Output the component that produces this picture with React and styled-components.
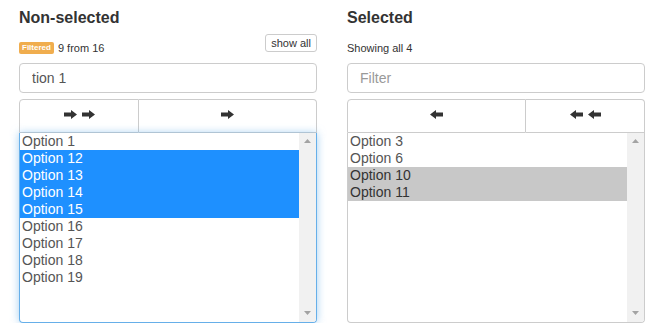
import React from 'react';
import styled, { createGlobalStyle } from 'styled-components';

const Global = createGlobalStyle`
    body {
        margin: 0;
        background: #fff;
        font-family: "Liberation Sans", Arial, sans-serif;
        color: #333;
    }
`;

const Page = styled.div`
    display: flex;
    gap: 30px;
    padding: 9px 15px 0 19px;
`;

const Column = styled.div`
    width: 298px;
    display: flex;
    flex-direction: column;
`;

const Title = styled.div`
    font-size: 16px;
    font-weight: bold;
    line-height: 18px;
    color: #333;
`;

const InfoRow = styled.div`
    height: 22px;
    margin-top: 7px;
    margin-bottom: 7px;
    display: flex;
    align-items: flex-end;
    font-size: 11px;
    line-height: 14px;
    color: #333;
    padding-bottom: 1px;
    box-sizing: border-box;
`;

const Badge = styled.span`
    display: inline-block;
    background: #f0ad4e;
    color: #fff;
    font-size: 8px;
    font-weight: bold;
    line-height: 12px;
    padding: 0 3px;
    border-radius: 2px;
    margin-right: 4px;
    margin-bottom: 1px;
`;

const ShowAll = styled.button`
    margin-left: auto;
    align-self: flex-start;
    font-family: inherit;
    font-size: 11px;
    line-height: 16px;
    padding: 0 5px;
    color: #333;
    background: #fff;
    border: 1px solid #ccc;
    border-radius: 3px;
`;

const Filter = styled.input`
    height: 30px;
    box-sizing: border-box;
    width: 100%;
    padding: 0 12px;
    font-family: inherit;
    font-size: 14px;
    color: #555;
    border: 1px solid #ccc;
    border-radius: 4px;
    outline: none;
    &::placeholder {
        color: #999;
    }
`;

const BtnGroup = styled.div`
    margin-top: 6px;
    display: flex;
    height: 34px;
`;

const MoveBtn = styled.button`
    flex: 0 0 ${p => p.w}px;
    box-sizing: border-box;
    background: #fff;
    border: 1px solid #ccc;
    border-left-width: ${p => (p.first ? 1 : 0)}px;
    border-radius: ${p => (p.first ? '4px 0 0 0' : '0 4px 0 0')};
    display: flex;
    align-items: center;
    justify-content: center;
    gap: 5px;
    padding: 0 0 4px;
`;

const ListBox = styled.div`
    height: 190px;
    box-sizing: border-box;
    display: flex;
    border: 1px solid ${p => (p.focused ? '#66afe9' : '#ccc')};
    border-top: none;
    border-radius: 0 0 4px 4px;
    box-shadow: ${p => (p.focused ? '0 0 8px rgba(102,175,233,.6)' : 'none')};
    overflow: hidden;
`;

const Options = styled.div`
    flex: 1;
`;

const Option = styled.div`
    height: 17px;
    line-height: 17px;
    padding-left: 2px;
    font-size: 14px;
    color: ${p => (p.sel === 'blue' ? '#fff' : p.sel === 'gray' ? '#333' : '#555')};
    background: ${p => (p.sel === 'blue' ? '#1e90ff' : p.sel === 'gray' ? '#c8c8c8' : 'transparent')};
`;

const ScrollBar = styled.div`
    width: 17px;
    background: #f1f1f1;
    display: flex;
    flex-direction: column;
    justify-content: space-between;
    align-items: center;
    padding: 6px 0 7px;
`;

const Arrow = ({ left }) => (
    <svg width="13" height="9" viewBox="0 0 13 9">
        <path
            d="M0 2.5h7V0l6 4.5L7 9V6.5H0z"
            fill="#333"
            transform={left ? 'translate(13 0) scale(-1 1)' : undefined}
        />
    </svg>
);

const Tri = ({ down }) => (
    <svg width="7" height="4" viewBox="0 0 7 4">
        <path d={down ? 'M0 0h7L3.5 4z' : 'M3.5 0L7 4H0z'} fill="#a3a3a3" />
    </svg>
);

const leftItems = [
    ['Option 1'],
    ['Option 12', 'blue'],
    ['Option 13', 'blue'],
    ['Option 14', 'blue'],
    ['Option 15', 'blue'],
    ['Option 16'],
    ['Option 17'],
    ['Option 18'],
    ['Option 19'],
];

const rightItems = [
    ['Option 3'],
    ['Option 6'],
    ['Option 10', 'gray'],
    ['Option 11', 'gray'],
];

function List({ items, focused }) {
    return (
        <ListBox focused={focused}>
            <Options>
                {items.map(([label, sel]) => (
                    <Option key={label} sel={sel}>{label}</Option>
                ))}
            </Options>
            <ScrollBar>
                <Tri />
                <Tri down />
            </ScrollBar>
        </ListBox>
    );
}

export default function App() {
    return (
        <>
            <Global />
            <Page>
                <Column>
                    <Title>Non-selected</Title>
                    <InfoRow>
                        <Badge>Filtered</Badge>
                        <span>9 from 16</span>
                        <ShowAll>show all</ShowAll>
                    </InfoRow>
                    <Filter defaultValue="tion 1" />
                    <BtnGroup>
                        <MoveBtn first w={120}>
                            <Arrow />
                            <Arrow />
                        </MoveBtn>
                        <MoveBtn w={178}>
                            <Arrow />
                        </MoveBtn>
                    </BtnGroup>
                    <List items={leftItems} focused />
                </Column>
                <Column>
                    <Title>Selected</Title>
                    <InfoRow>
                        <span>Showing all 4</span>
                    </InfoRow>
                    <Filter placeholder="Filter" />
                    <BtnGroup>
                        <MoveBtn first w={179}>
                            <Arrow left />
                        </MoveBtn>
                        <MoveBtn w={119}>
                            <Arrow left />
                            <Arrow left />
                        </MoveBtn>
                    </BtnGroup>
                    <List items={rightItems} />
                </Column>
            </Page>
        </>
    );
}
